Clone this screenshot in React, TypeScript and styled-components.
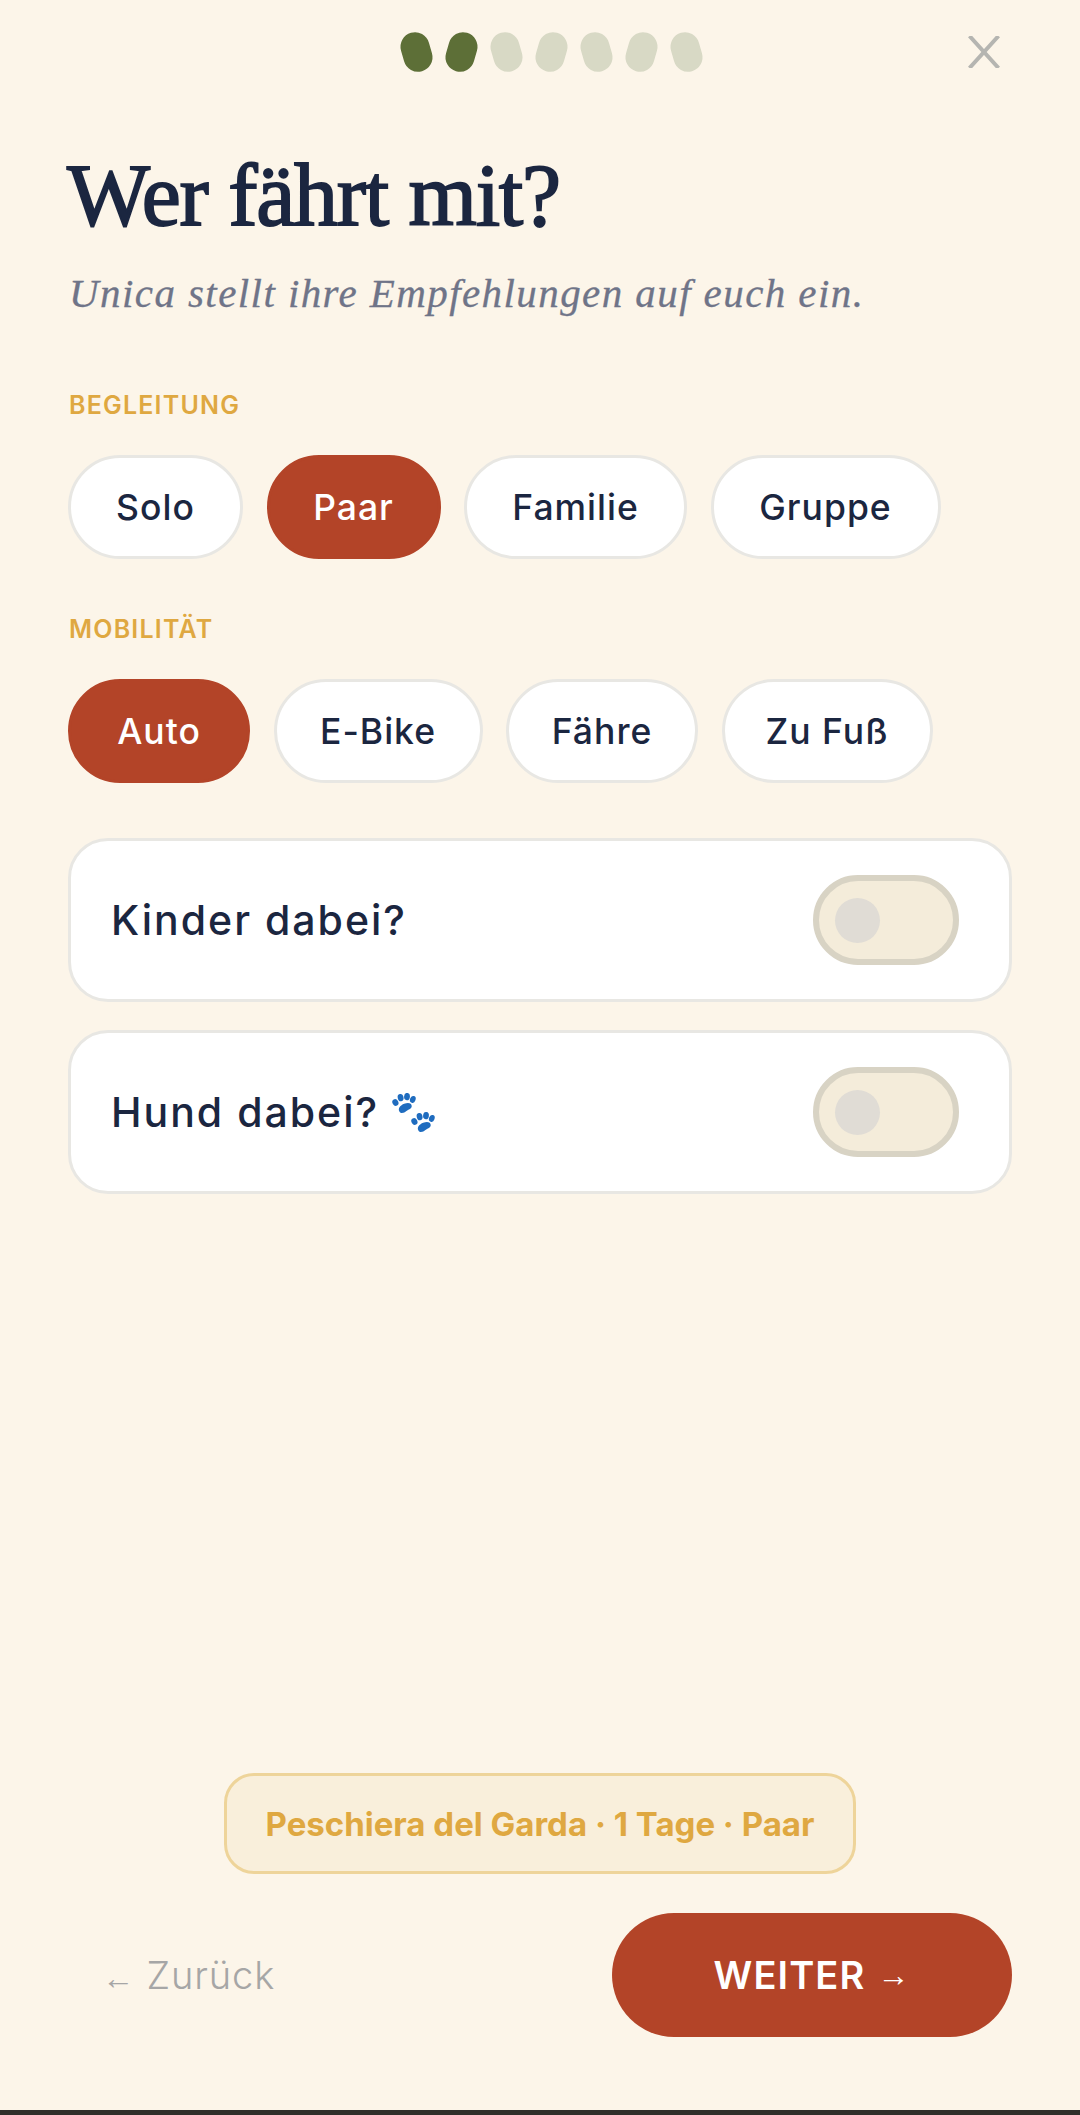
import styled, { createGlobalStyle } from 'styled-components';

const GlobalStyle = createGlobalStyle`
  html, body {
    margin: 0;
    padding: 0;
    background: #fcf5e9;
  }
  * {
    box-sizing: border-box;
  }
`;

const SANS = `Inter, "Noto Sans", sans-serif`;

const steps = [true, true, false, false, false, false, false];
const companions = [
  { label: 'Solo', width: 175 },
  { label: 'Paar', width: 174, active: true },
  { label: 'Familie', width: 223 },
  { label: 'Gruppe', width: 230 },
];
const mobility = [
  { label: 'Auto', width: 182, active: true },
  { label: 'E-Bike', width: 209 },
  { label: 'Fähre', width: 192 },
  { label: 'Zu Fuß', width: 211 },
];

const Paw = ({ x, y }: { x: number; y: number }) => (
  <g transform={`translate(${x} ${y})`}>
    <ellipse cx="3.4" cy="9.5" rx="2.9" ry="3.5" transform="rotate(-30 3.4 9.5)" />
    <ellipse cx="8.6" cy="4.6" rx="2.9" ry="3.7" transform="rotate(-12 8.6 4.6)" />
    <ellipse cx="15" cy="3.6" rx="2.9" ry="3.7" transform="rotate(6 15 3.6)" />
    <ellipse cx="20.8" cy="6.4" rx="2.8" ry="3.5" transform="rotate(20 20.8 6.4)" />
    <path d="M7.4 18.4c-1.8-2.8 1-6.2 4.8-7.6 3.6-1.3 6.6-1 7.4 1.4.7 2.2-1 3.6-3.2 4.5-2.6 1.1-2.8 2.6-4.9 3.1-1.7.4-3.3.1-4.1-1.4z" />
  </g>
);

const PawIcon = () => (
  <PawSvg viewBox="0 0 44 40" aria-hidden="true">
    <Paw x={0} y={0} />
    <Paw x={19} y={19} />
  </PawSvg>
);

const App = () => {
  return (
    <Page>
      <GlobalStyle />
      <TopBar>
        <Dots>
          {steps.map((done, i) => (
            <Dot key={i} $done={done} $odd={i % 2 === 1} />
          ))}
        </Dots>
        <CloseIcon viewBox="0 0 32 32" aria-hidden="true">
          <path d="M1.5 0 L30.5 32 M30.5 0 L1.5 32" />
        </CloseIcon>
      </TopBar>

      <Title>Wer fährt mit?</Title>
      <Subtitle>Unica stellt ihre Empfehlungen auf euch ein.</Subtitle>

      <SectionLabel>BEGLEITUNG</SectionLabel>
      <ChipRow>
        {companions.map((c) => (
          <Chip key={c.label} $active={c.active} $width={c.width}>
            {c.label}
          </Chip>
        ))}
      </ChipRow>

      <SectionLabel>MOBILITÄT</SectionLabel>
      <ChipRow>
        {mobility.map((c) => (
          <Chip key={c.label} $active={c.active} $width={c.width}>
            {c.label}
          </Chip>
        ))}
      </ChipRow>

      <Cards>
        <ToggleCard>
          <CardLabel>Kinder dabei?</CardLabel>
          <Toggle>
            <Knob />
          </Toggle>
        </ToggleCard>
        <ToggleCard>
          <CardLabel>
            Hund dabei?
            <PawIcon />
          </CardLabel>
          <Toggle>
            <Knob />
          </Toggle>
        </ToggleCard>
      </Cards>

      <Spacer />

      <SummaryWrap>
        <Summary>Peschiera del Garda · 1 Tage · Paar</Summary>
      </SummaryWrap>

      <Footer>
        <BackButton>
          <Arrow>←</Arrow> Zurück
        </BackButton>
        <NextButton>
          WEITER <Arrow>→</Arrow>
        </NextButton>
      </Footer>

      <BottomEdge />
    </Page>
  );
};

export default App;

const Page = styled.div`
  display: flex;
  flex-direction: column;
  width: 1080px;
  height: 2115px;
  background: #fcf5e9;
  font-family: ${SANS};
  overflow: hidden;
`;

const TopBar = styled.div`
  display: flex;
  align-items: flex-start;
  justify-content: space-between;
  height: 148px;
  padding: 32px 80px 0 402px;
`;

const Dots = styled.div`
  display: flex;
  gap: 16px;
`;

const Dot = styled.span<{ $done: boolean; $odd: boolean }>`
  display: block;
  width: 29px;
  height: 40px;
  border-radius: 14.5px;
  background: ${(p) => (p.$done ? '#5d6f37' : '#d8d9c5')};
  transform: rotate(${(p) => (p.$odd ? '16deg' : '-16deg')});
`;

const CloseIcon = styled.svg`
  width: 32px;
  height: 32px;
  margin-top: 4px;
  fill: none;
  stroke: #b5b5b1;
  stroke-width: 4;
`;

const Title = styled.h1`
  margin: 0 0 0 67px;
  font-family: "Liberation Serif", serif;
  font-weight: 400;
  font-size: 88px;
  line-height: 96px;
  letter-spacing: -1.3px;
  -webkit-text-stroke: 1.8px #1b2640;
  color: #1b2640;
`;

const Subtitle = styled.p`
  margin: 24px 0 0 69px;
  font-family: "Liberation Serif", serif;
  font-style: italic;
  font-size: 41px;
  line-height: 50px;
  letter-spacing: 1.42px;
  -webkit-text-stroke: 0.3px #6f7488;
  color: #6f7488;
`;

const SectionLabel = styled.div`
  margin: 72px 0 0 69px;
  font-weight: 600;
  font-size: 25px;
  line-height: 30px;
  letter-spacing: 1.2px;
  color: #dfa841;

  & + div {
    margin-top: 35px;
  }
`;

const ChipRow = styled.div`
  display: flex;
  gap: 23.5px;
  margin-left: 68px;

  & + div {
    margin-top: 55px;
  }
`;

const Chip = styled.div<{ $active?: boolean; $width: number }>`
  display: flex;
  align-items: center;
  justify-content: center;
  width: ${(p) => p.$width}px;
  height: 104px;
  border-radius: 52px;
  border: 3px solid ${(p) => (p.$active ? '#b34428' : '#e8e7e3')};
  background: ${(p) => (p.$active ? '#b34428' : '#ffffff')};
  color: ${(p) => (p.$active ? '#ffffff' : '#1b2640')};
  font-size: 35.5px;
  font-weight: 500;
  letter-spacing: 1px;
`;

const Cards = styled.div`
  display: flex;
  flex-direction: column;
  gap: 28px;
  margin: 59px 68px 0;
`;

const ToggleCard = styled.div`
  display: flex;
  align-items: center;
  justify-content: space-between;
  height: 164px;
  padding: 0 50px 0 40px;
  background: #ffffff;
  border: 3px solid #e8e7e3;
  border-radius: 40px;
`;

const CardLabel = styled.span`
  display: flex;
  align-items: center;
  gap: 13px;
  font-size: 41px;
  font-weight: 500;
  letter-spacing: 2px;
  color: #1b2640;
`;

const PawSvg = styled.svg`
  width: 44px;
  height: 40px;
  margin-top: 2px;
  fill: #1f6cbf;
`;

const Toggle = styled.div`
  display: flex;
  align-items: center;
  width: 146px;
  height: 90px;
  padding-left: 16px;
  border: 6px solid #d8d3c4;
  border-radius: 45px;
  background: #f4ecda;
`;

const Knob = styled.span`
  width: 45px;
  height: 45px;
  border-radius: 50%;
  background: #e0dcd5;
`;

const Spacer = styled.div`
  flex: 1;
`;

const SummaryWrap = styled.div`
  display: flex;
  justify-content: center;
`;

const Summary = styled.div`
  display: flex;
  align-items: center;
  justify-content: center;
  width: 632px;
  height: 101px;
  background: #f9efdb;
  border: 3px solid #eed49a;
  border-radius: 30px;
  color: #dfa841;
  font-size: 33px;
  font-weight: 700;
`;

const Footer = styled.div`
  display: flex;
  align-items: center;
  justify-content: space-between;
  margin-top: 39px;
  padding: 0 68px 0 102px;
`;

const BackButton = styled.div`
  font-size: 38px;
  font-weight: 300;
  color: #a6a6a6;
  letter-spacing: 0.9px;
`;

const Arrow = styled.span`
  font-family: "Liberation Sans", sans-serif;
  font-size: 32px;
`;

const NextButton = styled.div`
  display: flex;
  align-items: center;
  justify-content: center;
  gap: 12px;
  width: 400px;
  height: 124px;
  border-radius: 62px;
  background: #b34428;
  color: #ffffff;
  font-size: 38px;
  font-weight: 600;
  letter-spacing: 1.1px;
`;

const BottomEdge = styled.div`
  height: 5px;
  margin-top: 73px;
  background: #2f2f2a;
`;
